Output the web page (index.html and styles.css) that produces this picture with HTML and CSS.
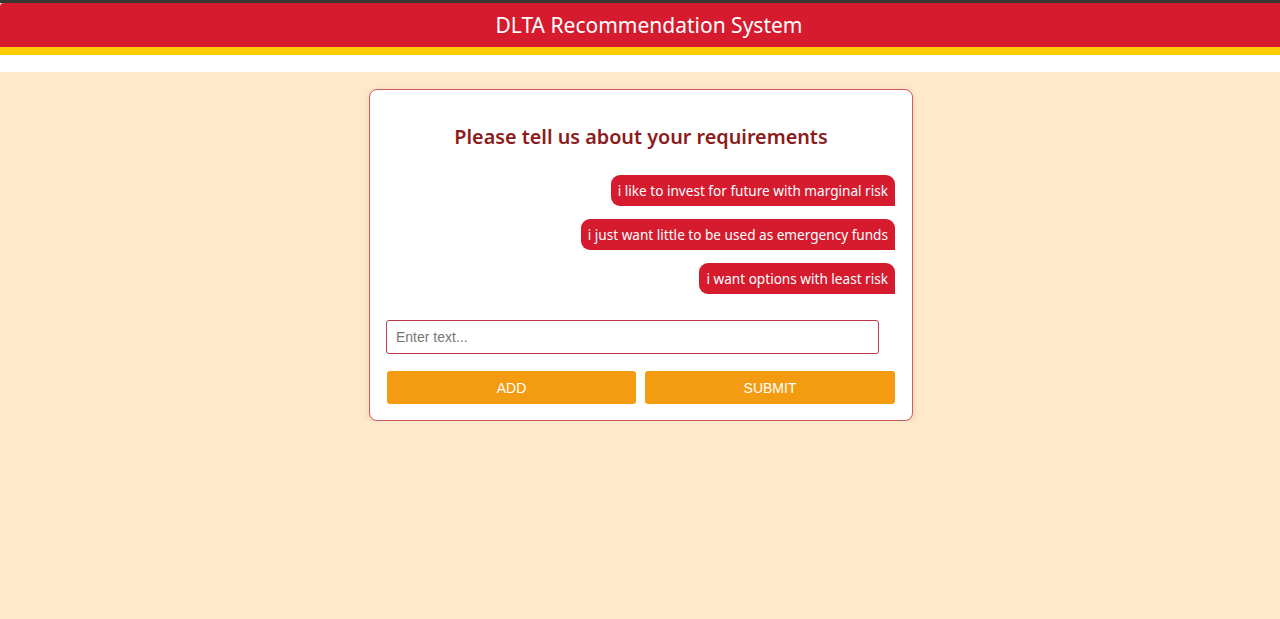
FILE: index.html
```html
<!DOCTYPE html>
<html lang="en">
<head>
<meta charset="utf-8">
<title>DLTA Recommendation System</title>
<link rel="stylesheet" href="styles.css">
</head>
<body>
<div class="topline"></div>
<header class="header">
  <h1 class="header-title">DLTA Recommendation System</h1>
</header>
<div class="stripe"></div>
<div class="gap"></div>
<main class="page">
  <section class="card">
    <h2 class="card-title">Please tell us about your requirements</h2>
    <div class="messages">
      <div class="bubble">i like to invest for future with marginal risk</div>
      <div class="bubble">i just want little to be used as emergency funds</div>
      <div class="bubble">i want options with least risk</div>
    </div>
    <input class="text-input" type="text" placeholder="Enter text...">
    <div class="actions">
      <button class="btn btn-add">ADD</button>
      <button class="btn btn-submit">SUBMIT</button>
    </div>
  </section>
</main>
</body>
</html>
```

FILE: styles.css
```css
* { box-sizing: border-box; }
html, body {
  margin: 0;
  padding: 0;
  background: #ffe9cb;
  font-family: "Noto Sans", "Liberation Sans", sans-serif;
}
.topline {
  height: 3px;
  background: #3a3636;
}
.header {
  height: 44px;
  background: #d51b2d;
  display: flex;
  align-items: center;
  justify-content: center;
  padding-left: 18px;
  border-top-left-radius: 4px;
}
.header-title {
  margin: 0;
  color: #ffffff;
  font-size: 21px;
  font-weight: 400;
}
.stripe {
  height: 8px;
  background: #ffcc00;
}
.gap {
  height: 17px;
  background: #ffffff;
}
.page {
  display: flex;
  justify-content: center;
  padding-top: 17px;
}
.card {
  width: 544px;
  margin-left: 2px;
  background: #ffffff;
  border: 1px solid #cf5a5f;
  border-radius: 8px;
  box-shadow: 0 2px 6px rgba(160, 80, 40, 0.18);
  padding: 33px 17px 16px 17px;
}
.card-title {
  margin: 0 0 25px 0;
  text-align: center;
  color: #8b1c1c;
  font-size: 19.8px;
  font-weight: 600;
  line-height: 27px;
}
.messages {
  display: flex;
  flex-direction: column;
  align-items: flex-end;
  gap: 13px;
}
.bubble {
  background: #d51b2d;
  color: #ffffff;
  font-size: 13.6px;
  line-height: 31px;
  height: 31px;
  padding: 0 7px;
  border-radius: 9px 9px 0 9px;
}
.text-input {
  display: block;
  margin: 26px 0 0 -1px;
  width: 493px;
  height: 34px;
  border: 1px solid #c2394a;
  border-radius: 3px;
  padding: 0 9px;
  font-family: "Liberation Sans", Arial, sans-serif;
  font-size: 14px;
  color: #333;
}
.text-input::placeholder { color: #777; }
.actions {
  display: flex;
  gap: 9px;
  margin-top: 17px;
}
.btn {
  height: 33px;
  border: none;
  border-radius: 3px;
  background: #f39c12;
  color: #ffffff;
  font-family: "Liberation Sans", Arial, sans-serif;
  font-size: 14px;
}
.btn-add { flex: 0 0 249px; }
.btn-submit { flex: 1 1 auto; }
```
